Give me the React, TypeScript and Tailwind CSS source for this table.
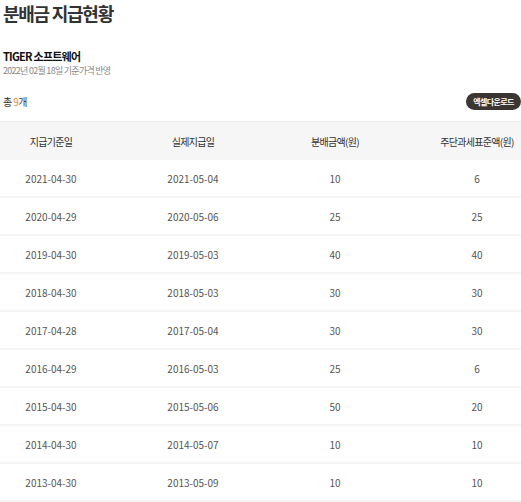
const rows = [
  ['2021-04-30', '2021-05-04', '10', '6'],
  ['2020-04-29', '2020-05-06', '25', '25'],
  ['2019-04-30', '2019-05-03', '40', '40'],
  ['2018-04-30', '2018-05-03', '30', '30'],
  ['2017-04-28', '2017-05-04', '30', '30'],
  ['2016-04-29', '2016-05-03', '25', '6'],
  ['2015-04-30', '2015-05-06', '50', '20'],
  ['2014-04-30', '2014-05-07', '10', '10'],
  ['2013-04-30', '2013-05-09', '10', '10'],
]

const headers = ['지급기준일', '실제지급일', '분배금액(원)', '주단과세표준액(원)']

export default function App() {
  return (
    <div
      className="w-[521px] h-[502px] overflow-hidden bg-white text-[#333]"
      style={{ fontFamily: '"Noto Sans CJK KR", "Noto Sans", sans-serif' }}
    >
      <h1 className="pl-[3px] text-[18px] leading-[26px] font-bold tracking-[-0.07em] text-[#333]">
        분배금 지급현황
      </h1>

      <div className="mt-[22px] pl-[3px]">
        <h2 className="text-[11px] leading-[16px] font-bold tracking-[-0.07em] text-[#111]">TIGER 소프트웨어</h2>
        <p className="text-[9px] leading-[14px] tracking-[-0.08em] text-[#888]">
          2022년 02월 18일 기준가격 반영
        </p>
      </div>

      <div className="mt-[15px] flex h-[17px] items-center justify-between pl-[3px]">
        <span className="text-[10px] tracking-[-0.06em] text-[#333]">
          총 <span className="text-[#f08c1e]">9</span>개
        </span>
        <button className="h-[17px] w-[55px] rounded-full bg-[#3b3632] text-[8px] font-bold tracking-[-0.08em] text-white">
          엑셀다운로드
        </button>
      </div>

      <div className="mt-[11px] w-[568px] border-t border-[#ebebeb]">
        <div className="grid h-[38px] grid-cols-4 items-center bg-[#f6f6f6] text-[10px] tracking-[-0.07em] text-[#333]">
          {headers.map((h) => (
            <div key={h} className="pr-[40px] text-center">
              {h}
            </div>
          ))}
        </div>
        {rows.map((r) => (
          <div
            key={r[0]}
            className="grid h-[38px] grid-cols-4 items-center border-b-2 border-[#f4f4f4] text-[10px] text-[#555]"
          >
            {r.map((c, i) => (
              <div key={i} className="pr-[40px] text-center">
                {c}
              </div>
            ))}
          </div>
        ))}
      </div>
    </div>
  )
}
